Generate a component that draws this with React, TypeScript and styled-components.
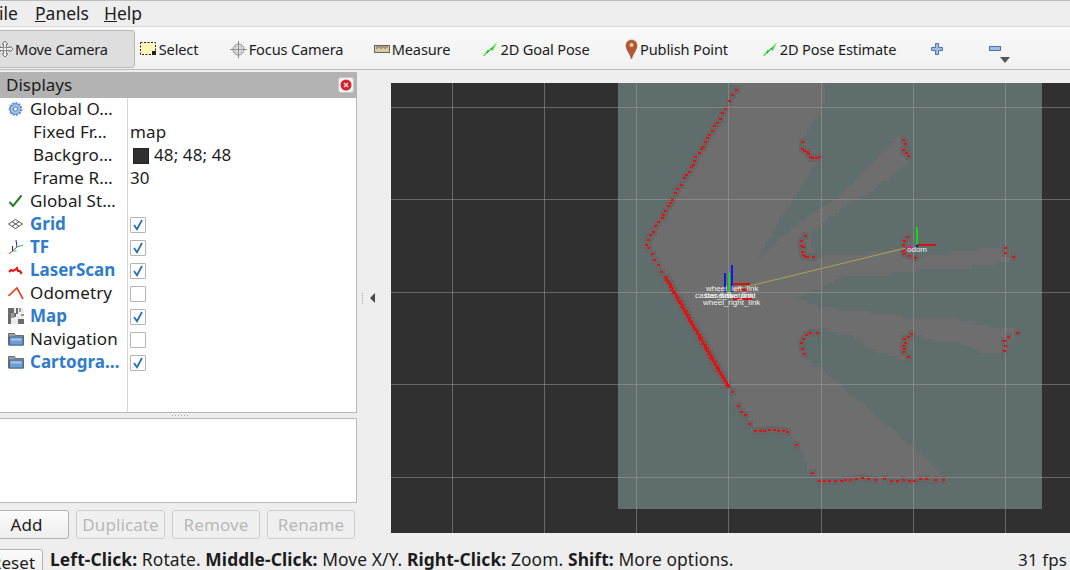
import React from "react";
import styled, { createGlobalStyle } from "styled-components";

const Global = createGlobalStyle`
  html, body { margin: 0; padding: 0; background: #eeeeee; overflow: hidden; }
  body { font-family: "Noto Sans", "Open Sans", sans-serif; font-size: 15px; color: #1c1c1c; }
`;

const Shell = styled.div`
  width: 1070px; height: 570px; overflow: hidden; display: flex; flex-direction: column;
  background: #eeeeee; border-top: 1px solid #bdbdbd; box-sizing: border-box;
`;
const MenuBar = styled.div`
  height: 26px; display: flex; align-items: center; flex: none; margin-left: -10px; gap: 15px; box-sizing: border-box;
  border-bottom: 1px solid #d8d8d8; font-size: 17.5px; padding-bottom: 1px;
`;
const MenuItem = styled.span`
  line-height: 20px;
  &::first-letter { text-decoration: underline; }
  &:first-child { margin-right: 2px; }
`;
const ToolBar = styled.div`
  height: 43px; flex: none; display: flex; align-items: stretch; box-sizing: border-box;
  background: linear-gradient(#f9f9f9, #f1f1f1); border-bottom: 1px solid #bcbcbc; padding: 3px 0 1px; margin-bottom: 2px;
`;
const Tool = styled.div<{ $w: number; $active?: boolean; $shift?: number }>`
  position: relative; flex: none; width: ${(p) => p.$w}px; margin-left: ${(p) => p.$shift ?? 0}px;
  display: flex; align-items: center; justify-content: center; gap: 2px; box-sizing: border-box; font-size: 14.6px;
  letter-spacing: -0.15px; white-space: nowrap;
  ${(p) => p.$active && "background: #dedede; border: 1px solid #b9b9b9; border-radius: 3px;"}
`;
const DropArrow = styled.span`
  position: absolute; left: 49px; top: 27px; width: 0; height: 0;
  border-left: 5px solid transparent; border-right: 5px solid transparent; border-top: 6px solid #555;
`;
const Body = styled.div`
  display: flex; flex: 1; min-height: 0;
`;
const Dock = styled.div`
  width: 357px; flex: none; display: flex; flex-direction: column;
`;
const DockTitle = styled.div`
  height: 26px; flex: none; background: #b3b3b3; display: flex; align-items: center; justify-content: space-between; box-sizing: border-box;
  padding: 0 3px 2px 6px; font-size: 17px;
`;
const CloseBtn = styled.div`
  width: 16px; height: 16px; background: #f4f4f4; border: 1px solid #c8c8c8; border-radius: 3px; box-sizing: border-box;
  display: flex; align-items: center; justify-content: center; margin-top: 2px;
`;
const Tree = styled.div`
  height: 315px; flex: none; background: #fff; border: 1px solid #b9b9b9; border-top: 0; border-left: 0; box-sizing: border-box;
  display: grid; grid-template-columns: 127px 1fr; grid-auto-rows: 23px; align-content: start; position: relative;
  &::before { content: ""; position: absolute; left: 127px; top: 0; bottom: 0; width: 1px; background: #d6d6d6; }
`;
const NameCell = styled.div<{ $child?: boolean; $on?: boolean }>`
  display: flex; align-items: center; padding-left: ${(p) => (p.$child ? 33 : 8)}px; padding-bottom: 2px; white-space: nowrap; font-size: 17px; letter-spacing: 0.1px;
  ${(p) => p.$on && "color: #2f7ccb; font-weight: 700; letter-spacing: 0;"}
`;
const IconSlot = styled.span`
  flex: none; width: 22px; display: flex; align-items: center; margin-top: 1px;
`;
const ValueCell = styled.div<{ $swatch?: boolean }>`
  display: flex; align-items: center; padding: 0 0 2px ${(p) => (p.$swatch ? 6 : 3)}px; gap: 5px; font-size: 17px; letter-spacing: 0.1px;
`;
const Swatch = styled.span`
  width: 16px; height: 16px; background: #303030; border: 1px solid #222; box-sizing: border-box; margin-top: 2px;
`;
const Check = styled.span`
  width: 16px; height: 16px; box-sizing: border-box; border: 1px solid #b5b5b5; background: #fff; border-radius: 1px; margin-top: 2px;
  display: flex; align-items: center; justify-content: center;
`;
const HSplit = styled.div`
  height: 5px; flex: none; display: flex; justify-content: center; align-items: center; padding-left: 4px;
  &::after { content: ""; width: 17px; height: 1px; background: repeating-linear-gradient(90deg, #a8a8a8 0 1px, transparent 1px 3px); }
`;
const Help = styled.div`
  height: 85px; flex: none; background: #fff; border: 1px solid #b9b9b9; border-left: 0; box-sizing: border-box;
`;
const Buttons = styled.div`
  display: flex; gap: 7px; margin: 7px 0 0 -16px;
`;
const Btn = styled.div<{ $w: number; $off?: boolean }>`
  width: ${(p) => p.$w}px; height: 29px; box-sizing: border-box; display: flex; align-items: center; justify-content: center;
  border: 1px solid ${(p) => (p.$off ? "#cdcdcd" : "#b2b2b2")}; border-radius: 3px; font-size: 17px; letter-spacing: 0.1px;
  background: ${(p) => (p.$off ? "#f0f0f0" : "linear-gradient(#fbfbfb, #eeeeee)")};
  color: ${(p) => (p.$off ? "#b8b8b8" : "#1c1c1c")};
`;
const Splitter = styled.div`
  width: 34px; flex: none; position: relative; display: flex; align-items: center; padding: 0 0 21px 5px; box-sizing: border-box;
  &::before { content: ""; width: 1px; height: 11px; margin-right: 6px; border-left: 1px dotted #a8a8a8; }
  &::after { content: ""; width: 0; height: 0; border-top: 5px solid transparent; border-bottom: 5px solid transparent; border-right: 5px solid #4a4a4a; }
`;
const Render = styled.div`
  flex: 1; padding-top: 11px;
  svg { display: block; }
`;
const Status = styled.div`
  height: 25px; flex: none; display: flex; align-items: center; font-size: 17px; letter-spacing: 0.1px; white-space: nowrap; overflow: hidden;
  b { font-weight: 700; }
`;
const ResetBtn = styled.div`
  width: 60px; height: 30px; margin: 4px 7px -9px -17px; flex: none; box-sizing: border-box; border: 1px solid #b2b2b2; border-radius: 3px;
  background: linear-gradient(#fbfbfb, #eeeeee); display: flex; justify-content: center; padding-top: 1px; font-size: 17px;
`;
const StatusText = styled.div`
  flex: 1; padding-top: 3px; font-size: 17.4px;
`;
const Fps = styled.div`
  padding: 3px 3px 0 0;
`;

/* ---------- Icons ---------- */
const MoveIcon = () => (
  <svg width="16" height="18" viewBox="0 0 16 18" fill="none" stroke="#777">
    <path d="M8 1l3 3H9.500v3.500H13V6l3 3-3 3v-1.500H9.500V14H11l-3 3-3-3h1.500v-3.500H3V12L0 9l3-3v1.500h3.500V4H5z" fill="#eee" />
    <path d="M6.500 7.500h3v3h-3z" stroke="#999" />
  </svg>
);
const SelectIcon = () => (
  <svg width="17" height="14" viewBox="0 0 17 14">
    <rect x=".5" y=".5" width="15" height="12" fill="#fdf8b8" stroke="#222" strokeDasharray="2 1.500" />
    <path d="M12 9h4v4h-4z" fill="#222" />
  </svg>
);
const FocusIcon = () => (
  <svg width="17" height="17" viewBox="0 0 17 17" fill="none" stroke="#8a8a8a">
    <circle cx="8.500" cy="8.500" r="5.500" fill="#e6e6e6" />
    <path d="M8.500 0v17M0 8.500h17" />
    <path d="M5.500 5.500h6v6h-6z" stroke="#bbb" />
  </svg>
);
const RulerIcon = () => (
  <svg width="16" height="8" viewBox="0 0 16 8">
    <rect x=".5" y=".5" width="15" height="7" fill="#d9ce9b" stroke="#666" />
    <path d="M3 1v3M5 1v2M7 1v3M9 1v2M11 1v3M13 1v2" stroke="#666" />
  </svg>
);
const ArrowIcon = () => (
  <svg width="16" height="16" viewBox="0 0 16 16">
    <path d="M1 15L6 8.500 7 10 15 1 10.500 10 9 8.500 2 15z" fill="#1ee61e" />
    <path d="M5 12L10 6.500" stroke="#0f8f2f" strokeWidth="1" />
  </svg>
);
const PinIcon = () => (
  <svg width="13" height="20" viewBox="0 0 13 20">
    <path d="M6.500 20C5.500 15 1 11 1 6.500a5.500 5.500 0 0 1 11 0C12 11 7.500 15 6.500 20z" fill="#b8562e" stroke="#7f4a30" strokeWidth=".6" />
    <circle cx="6.500" cy="6" r="2" fill="#f2c9a8" />
  </svg>
);
const PlusIcon = () => (
  <svg width="12" height="12" viewBox="0 0 12 12">
    <path d="M4.500.5h3v4h4v3h-4v4h-3v-4h-4v-3h4z" fill="#9dbde3" stroke="#4a74ab" />
  </svg>
);
const MinusIcon = () => (
  <svg width="12" height="6" viewBox="0 0 12 6">
    <rect x=".5" y=".5" width="11" height="4" fill="#9dbde3" stroke="#4a74ab" />
  </svg>
);
const CloseIcon = () => (
  <svg width="12" height="12" viewBox="0 0 12 12">
    <circle cx="6" cy="6" r="5.500" fill="#d6222a" />
    <path d="M4 4l4 4M8 4l-4 4" stroke="#f6d9d9" strokeWidth="1.500" />
  </svg>
);
const GearIcon = () => (
  <svg width="15" height="16" viewBox="0 0 15 16">
    <circle cx="7.500" cy="8" r="5.500" fill="#a5bfe6" stroke="#4f7ec2" strokeWidth="1.500" strokeDasharray="2 .8" />
    <circle cx="7.500" cy="8" r="6.300" fill="none" stroke="#6f9ad6" strokeWidth="1.300" strokeDasharray="1.800 1.800" />
    <circle cx="7.500" cy="8" r="2.200" fill="#e7eefa" stroke="#4f7ec2" />
  </svg>
);
const TickIcon = () => (
  <svg width="15" height="14" viewBox="0 0 15 14">
    <path d="M1.500 8l3.500 4L13.500 1.500" fill="none" stroke="#2c7a2c" strokeWidth="2" />
  </svg>
);
const GridIcon = () => (
  <svg width="15" height="10" viewBox="0 0 15 10" fill="none" stroke="#555">
    <path d="M7.500.5l7 4.500-7 4.500-7-4.500zM4 2.700l7 4.600M11 2.700L4 7.300" />
  </svg>
);
const TfIcon = () => (
  <svg width="16" height="15" viewBox="0 0 16 15" fill="none">
    <path d="M9 7L8 0" stroke="#2222dd" /><path d="M9 7l6-2" stroke="#22cc44" /><path d="M9 7L1 14" stroke="#e22" />
    <path d="M4.500 6v5" stroke="#2222dd" /><path d="M4.500 11h4" stroke="#22cc44" />
  </svg>
);
const LaserIcon = () => (
  <svg width="16" height="11" viewBox="0 0 16 11" fill="none">
    <path d="M1 7l2-2 2 1 2-1 2-2 1 3 2 0 1 2 1-1" stroke="#ee1111" strokeWidth="2" />
  </svg>
);
const OdomIcon = () => (
  <svg width="16" height="13" viewBox="0 0 16 13" fill="none">
    <path d="M.500 9L9 1l6 11" stroke="#ee3a22" strokeWidth="1.600" />
  </svg>
);
const MapIcon = () => (
  <svg width="16" height="16" viewBox="0 0 16 16" shapeRendering="crispEdges">
    <rect width="16" height="16" fill="#ededed" />
    <path d="M0 0h6v5H3v5H0zM8 0h2v6H8zM6 5h2v4H6zM0 10h3v6H0zM10 11h6v5h-6z" fill="#6b6b6b" />
    <path d="M3 5h3v5H3zM11 0h2v4h-2zM13 6h3v2h-3z" fill="#9a9a9a" />
  </svg>
);
const FolderIcon = () => (
  <svg width="16" height="14" viewBox="0 0 16 14">
    <path d="M.500 13V1.500h6l1 2h8V13z" fill="#9c9c9c" stroke="#6d6d6d" />
    <rect x="1.500" y="5" width="13.500" height="8" fill="#6f9fd2" stroke="#46688f" />
    <rect x="3" y="6.500" width="10.500" height="2" fill="#a6c6e8" />
  </svg>
);
const CheckMark = () => (
  <svg width="12" height="12" viewBox="0 0 12 12">
    <path d="M2 6l3 4.200L10 1" fill="none" stroke="#2a6fb2" strokeWidth="1.800" />
  </svg>
);

/* ---------- Viewport scene ---------- */
type P = [number, number];
const fan: P[] = [
  [736, 83], [825, 83], [822, 110], [803, 138], [820, 157], [787, 207], [755, 262], [793, 227], [840, 195], [900, 137],
  [910, 160], [873, 190], [847, 203], [808, 235], [815, 258], [830, 255], [880, 252], [902, 247], [904, 235], [916, 258],
  [927, 256], [955, 252], [988, 248], [1002, 245], [1015, 258], [992, 265], [955, 268], [918, 270], [880, 275], [843, 277],
  [797, 298], [827, 308], [867, 312], [913, 317], [953, 318], [992, 327], [1018, 328], [1018, 336], [1008, 345], [1002, 352],
  [983, 352], [960, 343], [943, 343], [913, 333], [908, 361], [900, 358], [873, 350], [853, 337], [820, 328], [815, 333],
  [802, 340], [801, 355], [820, 368], [847, 390], [880, 420], [913, 447], [940, 473], [947, 483], [818, 483], [808, 470],
  [800, 447], [788, 434], [753, 434], [728, 387], [645, 245],
];
const inside = (x: number, y: number, poly: P[]) => {
  let c = false;
  for (let i = 0, j = poly.length - 1; i < poly.length; j = i++) {
    const [xi, yi] = poly[i];
    const [xj, yj] = poly[j];
    if (yi > y !== yj > y && x < ((xj - xi) * (y - yi)) / (yj - yi) + xi) c = !c;
  }
  return c;
};
const CELL = 3.5;
const freeRuns: { x: number; y: number; w: number; h: number }[] = [];
for (let r = 0; r * CELL < 426; r++) {
  let start = -1;
  const y = 83 + r * CELL;
  for (let q = 0; q * CELL <= 424; q++) {
    const x = 618 + q * CELL;
    const on = inside(x + CELL / 2, y + CELL / 2, fan);
    if (on && start < 0) start = x;
    if (!on && start >= 0) {
      freeRuns.push({ x: Math.round(start), y: Math.round(y), w: Math.round(x) - Math.round(start), h: Math.round(y + CELL) - Math.round(y) });
      start = -1;
    }
  }
}
const sparse: P[] = [
  [736, 90], [732, 95], [729, 101], [725, 109], [722, 113], [720, 119], [717, 123], [714, 126], [712, 131], [709, 135], [707, 138], [705, 142],
  [703, 147], [701, 149], [699, 153], [695, 157], [694, 161], [693, 165], [691, 167], [689, 172], [686, 175], [684, 178], [681, 185], [677, 189],
  [675, 193], [672, 200], [670, 203], [668, 206], [665, 211], [663, 215], [662, 218], [658, 222], [655, 226], [653, 232], [650, 235], [648, 240], [646, 245],
  [648, 248], [652, 254], [654, 260], [658, 265], [661, 272],
  [728, 387], [732, 392], [738, 406], [741, 412], [745, 415], [749, 424], [755, 431], [760, 431], [764, 431], [769, 430], [774, 430], [778, 431], [783, 431], [787, 432],
  [796, 445], [812, 473], [819, 481], [824, 481], [829, 481], [835, 481], [841, 481], [845, 480], [850, 480], [856, 479], [862, 478], [868, 479], [875, 480], [884, 479], [891, 481], [897, 481], [903, 480], [909, 481], [914, 481], [920, 479], [926, 479], [935, 480], [943, 480],
  [802, 142], [802, 149], [804, 151], [807, 152], [808, 154], [810, 157], [812, 158], [816, 158], [819, 157],
  [903, 140], [905, 144], [903, 150], [906, 153], [908, 156],
  [805, 236], [801, 241], [801, 246], [803, 247], [802, 252], [803, 255], [805, 257], [807, 257], [813, 257],
  [907, 237], [904, 241], [903, 245], [905, 248], [903, 251], [904, 254], [909, 256], [915, 258],
  [1005, 248], [1005, 253], [1013, 257],
  [1017, 333], [1008, 337], [1004, 341], [1005, 346], [1004, 351],
  [911, 334], [908, 337], [904, 339], [905, 343], [903, 346], [904, 349], [903, 352], [908, 357],
  [817, 333], [810, 333], [806, 335], [803, 339], [801, 343], [802, 349], [804, 354],
];
const wallDots: P[] = [];
for (let i = 0; i < 90; i++) {
  const t = i / 89;
  const j = Math.sin(i * 2.3) * 0.8;
  wallDots.push([Math.round(665 + 63 * t + j), Math.round(277 + 110 * t - j * 0.4)]);
}
const dots = [...sparse, ...wallDots];
const vLines = [452, 544, 636, 728, 821, 913, 1005];
const hLines = [107, 199, 292, 384, 477];

const SceneText = styled.text`
  font-family: "Liberation Sans", sans-serif; font-size: 8px; fill: #f2f2f2;
`;
const SceneLabels = () => (
  <g>
    <SceneText x="706" y="291">wheel_left_link</SceneText>
    <SceneText x="695" y="298">caster_link</SceneText>
    <SceneText x="705" y="298">base_footprint</SceneText>
    <SceneText x="720" y="298">base_link</SceneText>
    <SceneText x="703" y="305">wheel_right_link</SceneText>
    <SceneText x="907" y="252">odom</SceneText>
  </g>
);
const Scene = () => (
  <svg width="679" height="450" viewBox="391 83 679 450">
    <rect x="391" y="83" width="679" height="450" fill="#303030" />
    <g shapeRendering="crispEdges">
      <rect x="618" y="83" width="424" height="426" fill="#5f6e6c" />
      {freeRuns.map((r, i) => <rect key={i} x={r.x} y={r.y} width={r.w} height={r.h} fill="#6e6e6e" />)}
      {dots.map(([x, y], i) => <rect key={i} x={x - 3} y={y - 4} width="7" height="8" fill="#666666" />)}
      {vLines.map((x) => <rect key={x} x={x} y="83" width="1" height="450" fill="#a0a0a0" opacity=".5" />)}
      {hLines.map((y) => <rect key={y} x="391" y={y} width="679" height="1" fill="#a0a0a0" opacity=".5" />)}
      {dots.map(([x, y], i) => <rect key={i} x={x - 1} y={y - 1} width="3" height="2" fill="#e01212" />)}
      <rect x="733" y="283" width="17" height="2" fill="#d81010" />
      <rect x="733" y="289" width="17" height="2" fill="#d81010" />
      <rect x="733" y="298" width="19" height="2" fill="#d81010" />
      <rect x="724" y="273" width="2" height="19" fill="#1515ee" />
      <rect x="731" y="265" width="2" height="27" fill="#1515ee" />
      <rect x="728" y="273" width="2" height="19" fill="#18d818" />
      <rect x="916" y="227" width="2" height="18" fill="#12d812" />
      <rect x="917" y="244" width="19" height="2" fill="#cc1515" />
      <rect x="916" y="245" width="2" height="2" fill="#1414cc" />
      <rect x="908" y="246" width="4" height="3" fill="#e0208a" />
    </g>
    <path d="M733 290L906 248" stroke="#a9a94e" strokeWidth="1" fill="none" />
    <SceneLabels />
  </svg>
);

const rows: { name: string; icon?: React.ReactNode; on?: boolean; child?: boolean; check?: boolean; value?: string; swatch?: boolean }[] = [
  { name: "Global O…", icon: <GearIcon /> },
  { name: "Fixed Fr…", child: true, value: "map" },
  { name: "Backgro…", child: true, value: "48; 48; 48", swatch: true },
  { name: "Frame R…", child: true, value: "30" },
  { name: "Global St…", icon: <TickIcon /> },
  { name: "Grid", icon: <GridIcon />, on: true, check: true },
  { name: "TF", icon: <TfIcon />, on: true, check: true },
  { name: "LaserScan", icon: <LaserIcon />, on: true, check: true },
  { name: "Odometry", icon: <OdomIcon />, check: false },
  { name: "Map", icon: <MapIcon />, on: true, check: true },
  { name: "Navigation", icon: <FolderIcon />, check: false },
  { name: "Cartogra…", icon: <FolderIcon />, on: true, check: true },
];

export default function App() {
  return (
    <>
      <Global />
      <Shell>
        <MenuBar>
          <MenuItem>File</MenuItem>
          <MenuItem>Panels</MenuItem>
          <MenuItem>Help</MenuItem>
        </MenuBar>
        <ToolBar>
          <Tool $w={165} $shift={-30} $active><MoveIcon />Move Camera</Tool>
          <Tool $w={68}><SelectIcon />Select</Tool>
          <Tool $w={167}><FocusIcon />Focus Camera</Tool>
          <Tool $w={84}><RulerIcon />Measure</Tool>
          <Tool $w={164}><ArrowIcon />2D Goal Pose</Tool>
          <Tool $w={117}><PinIcon />Publish Point</Tool>
          <Tool $w={188}><ArrowIcon />2D Pose Estimate</Tool>
          <Tool $w={28}><PlusIcon /></Tool>
          <Tool $w={88}><MinusIcon /><DropArrow /></Tool>
        </ToolBar>
        <Body>
          <Dock>
            <DockTitle>
              Displays
              <CloseBtn><CloseIcon /></CloseBtn>
            </DockTitle>
            <Tree>
              {rows.map((r) => (
                <React.Fragment key={r.name}>
                  <NameCell $child={r.child} $on={r.on}>
                    {r.icon && <IconSlot>{r.icon}</IconSlot>}
                    {r.name}
                  </NameCell>
                  <ValueCell $swatch={r.swatch}>
                    {r.swatch && <Swatch />}
                    {r.value}
                    {r.check !== undefined && <Check>{r.check && <CheckMark />}</Check>}
                  </ValueCell>
                </React.Fragment>
              ))}
            </Tree>
            <HSplit />
            <Help />
            <Buttons>
              <Btn $w={85}>Add</Btn>
              <Btn $w={89} $off>Duplicate</Btn>
              <Btn $w={88} $off>Remove</Btn>
              <Btn $w={88} $off>Rename</Btn>
            </Buttons>
          </Dock>
          <Splitter />
          <Render><Scene /></Render>
        </Body>
        <Status>
          <ResetBtn>Reset</ResetBtn>
          <StatusText><b>Left-Click:</b> Rotate. <b>Middle-Click:</b> Move X/Y. <b>Right-Click:</b> Zoom. <b>Shift:</b> More options.</StatusText>
          <Fps>31 fps</Fps>
        </Status>
      </Shell>
    </>
  );
}
